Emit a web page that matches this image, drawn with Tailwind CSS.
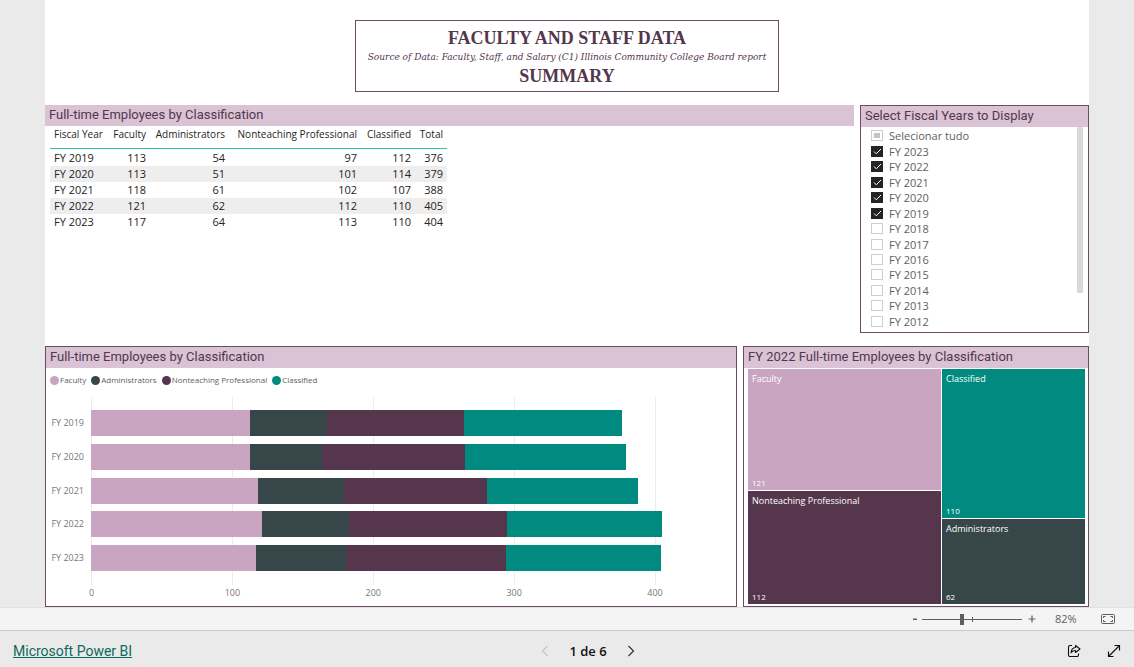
<!DOCTYPE html>
<html lang="en">
<head>
<meta charset="utf-8">
<title>Faculty and Staff Data</title>
<script src="https://cdn.jsdelivr.net/npm/@tailwindcss/browser@4"></script>
</head>
<body class="flex h-screen flex-col overflow-hidden bg-[#eaeaea] font-['Open_Sans','Noto_Sans',sans-serif] text-[#252423]">
<main class="mx-[45px] flex min-h-0 flex-1 flex-col bg-white pt-5">
  <header class="mx-auto flex h-[72px] w-[424px] flex-col items-center justify-center border border-[#6b4c66] pt-[2px] text-center text-[#54364d]">
    <h1 class="font-['Liberation_Serif',serif] text-[18px] leading-[22px] font-bold">FACULTY AND STAFF DATA</h1>
    <p class="font-['DejaVu_Serif_Condensed','DejaVu_Serif',serif] text-[10px] leading-4 whitespace-nowrap italic">Source of Data: Faculty, Staff, and Salary (C1) Illinois Community College Board report</p>
    <h2 class="font-['Liberation_Serif',serif] text-[18px] leading-[22px] font-bold">SUMMARY</h2>
  </header>

  <div class="mt-[13px] flex h-[228px] gap-[6px]">
    <section class="min-w-0 flex-1">
      <h2 class="h-[21px] bg-[#d9c3d5] pl-1 font-['Roboto',sans-serif] text-[13px] leading-[19px] text-[#54364d]">Full-time Employees by Classification</h2>
      <table class="ml-[5px] w-[397px] table-fixed border-separate border-spacing-0 text-[11px] leading-4">
        <colgroup><col class="w-[57px]"><col class="w-[43px]"><col class="w-[79px]"><col class="w-[132px]"><col class="w-[54px]"><col class="w-[32px]"></colgroup>
        <thead class="text-[10px] [&_th]:border-b [&_th]:border-[#2fbfb4] [&_th]:pr-1">
          <tr class="h-[23px] text-right align-top whitespace-nowrap">
            <th class="pl-1 text-left font-normal">Fiscal Year</th><th class="font-normal">Faculty</th><th class="font-normal">Administrators</th><th class="font-normal">Nonteaching Professional</th><th class="font-normal">Classified</th><th class="font-normal">Total</th>
          </tr>
        </thead>
        <tbody class="text-right [&_td]:pr-1 [&_th]:pl-1 [&_th]:text-left [&_th]:font-normal [&>tr:nth-child(even)]:bg-[#eeeeee]">
          <tr class="h-[17px]"><th scope="row">FY 2019</th><td>113</td><td>54</td><td>97</td><td>112</td><td>376</td></tr>
          <tr><th scope="row">FY 2020</th><td>113</td><td>51</td><td>101</td><td>114</td><td>379</td></tr>
          <tr><th scope="row">FY 2021</th><td>118</td><td>61</td><td>102</td><td>107</td><td>388</td></tr>
          <tr><th scope="row">FY 2022</th><td>121</td><td>62</td><td>112</td><td>110</td><td>405</td></tr>
          <tr><th scope="row">FY 2023</th><td>117</td><td>64</td><td>113</td><td>110</td><td>404</td></tr>
        </tbody>
      </table>
    </section>

    <section class="flex w-[229px] flex-col border border-[#6b4c66]">
      <h2 class="h-[21px] shrink-0 bg-[#d9c3d5] pl-1 font-['Roboto',sans-serif] text-[13px] leading-[19px] text-[#54364d]">Select Fiscal Years to Display</h2>
      <div class="flex flex-1 justify-between pr-[5px]">
        <div id="years" class="mt-px flex h-[201px] flex-col pl-[10px] text-[11px] leading-[15px] text-[#605e5c]"></div>
        <div class="h-[166px] w-[6px] bg-[#d9d9d9]"></div>
      </div>
    </section>
  </div>

  <div class="mt-[13px] flex h-[261px] gap-[6px]">
    <section class="flex min-w-0 flex-1 flex-col border border-[#6b4c66]">
      <h2 class="h-[21px] bg-[#d9c3d5] pl-1 font-['Roboto',sans-serif] text-[13px] leading-[19px] text-[#54364d]">Full-time Employees by Classification</h2>
      <ul class="mt-1 flex gap-[5px] pl-1 text-[8px] leading-4 text-[#605e5c]">
        <li class="flex items-center gap-px"><span class="size-[9px] rounded-full bg-[#c9a5c1]"></span>Faculty</li>
        <li class="flex items-center gap-px"><span class="size-[9px] rounded-full bg-[#374649]"></span>Administrators</li>
        <li class="flex items-center gap-px"><span class="size-[9px] rounded-full bg-[#55364c]"></span>Nonteaching Professional</li>
        <li class="flex items-center gap-px"><span class="size-[9px] rounded-full bg-[#018a80]"></span>Classified</li>
      </ul>
      <div class="mt-[9px] flex pr-[10px] text-[9px] text-[#777777]">
        <div id="cats" class="flex h-[174px] w-[45px] flex-col justify-between pt-[13px] pr-[7px] text-right leading-[26px]"></div>
        <div class="min-w-0 flex-1">
          <div class="relative h-[188px]">
            <div class="absolute inset-y-0 left-0 flex w-[88.9%] justify-between"><i class="w-px bg-[#ececec]"></i><i class="w-px bg-[#ececec]"></i><i class="w-px bg-[#ececec]"></i><i class="w-px bg-[#ececec]"></i><i class="w-px bg-[#ececec]"></i></div>
            <div id="bars" class="relative flex h-[174px] flex-col justify-between pt-[13px]"></div>
          </div>
          <div class="flex w-[88.9%] justify-between leading-4"><span class="flex w-px justify-center">0</span><span class="flex w-px justify-center">100</span><span class="flex w-px justify-center">200</span><span class="flex w-px justify-center">300</span><span class="flex w-px justify-center">400</span></div>
        </div>
      </div>
    </section>

    <section class="flex w-[346px] flex-col border border-[#6b4c66]">
      <h2 class="h-[21px] shrink-0 bg-[#d9c3d5] pl-1 font-['Roboto',sans-serif] text-[13px] leading-[19px] text-[#54364d]">FY 2022 Full-time Employees by Classification</h2>
      <div class="mt-px mr-[3px] mb-[2px] ml-1 flex flex-1 gap-px text-[9px] leading-[14px] font-medium text-white">
        <div class="flex w-[193px] flex-col gap-px">
          <div class="flex flex-[121] flex-col justify-between bg-[#c9a5c1] px-1 pt-[3px]"><span>Faculty</span><span class="text-[8px] leading-[14px]">121</span></div>
          <div class="flex flex-[112] flex-col justify-between bg-[#55364c] px-1 pt-[3px]"><span>Nonteaching Professional</span><span class="text-[8px] leading-[14px]">112</span></div>
        </div>
        <div class="flex flex-1 flex-col gap-px">
          <div class="flex flex-[110] flex-col justify-between bg-[#018a80] px-1 pt-[3px]"><span>Classified</span><span class="text-[8px] leading-[14px]">110</span></div>
          <div class="flex flex-[62] flex-col justify-between bg-[#374649] px-1 pt-[3px]"><span>Administrators</span><span class="text-[8px] leading-[14px]">62</span></div>
        </div>
      </div>
    </section>
  </div>
</main>

<div class="flex h-[23px] shrink-0 items-center justify-end border-t border-[#e1e1e1] bg-[#f4f4f4] pr-[19px] text-[#605e5c]">
  <button aria-label="Zoom out" class="flex h-4 w-3 items-center justify-center"><svg class="size-3" viewBox="0 0 12 12"><path d="M3 5.500h4v1.500H3z" fill="currentColor"/></svg></button>
  <div class="relative flex h-4 w-[100px] items-center">
    <div class="absolute top-[6px] left-[50px] h-[5px] w-px bg-[#605e5c]"></div>
    <input type="range" aria-label="Zoom" min="0" max="100" value="40" class="relative h-3 w-full appearance-none bg-transparent [&::-webkit-slider-runnable-track]:h-px [&::-webkit-slider-runnable-track]:bg-[#605e5c] [&::-webkit-slider-thumb]:-mt-[5px] [&::-webkit-slider-thumb]:h-[11px] [&::-webkit-slider-thumb]:w-1 [&::-webkit-slider-thumb]:appearance-none [&::-webkit-slider-thumb]:bg-[#605e5c]">
  </div>
  <button aria-label="Zoom in" class="ml-1 flex size-3 items-center justify-center"><svg class="size-3" viewBox="0 0 12 12"><path d="M2.500 6h7M6 2.500v7" stroke="currentColor" stroke-width="1.200"/></svg></button>
  <span class="ml-[17px] w-[24px] text-[11px] leading-4">82%</span>
  <button aria-label="Fit to page" class="ml-[22px]"><svg class="h-[12px] w-[14px]" viewBox="0 0 14 12" fill="none" stroke="currentColor"><rect x=".5" y="1.500" width="13" height="9" rx="1"/><path d="M2.500 5V3.500H4.500M9.500 3.500h2V5M2.500 7v1.500h2M9.500 8.500h2V7"/></svg></button>
</div>

<footer class="grid h-[37px] shrink-0 grid-cols-3 items-center border-t border-[#c8c8c8] px-[13px] pt-[3px] text-[#111111]">
  <a href="#" class="justify-self-start font-['Roboto',sans-serif] text-[14px] leading-5 text-[#0b6a5c] underline">Microsoft Power BI</a>
  <nav class="flex items-center justify-self-center pl-[42px] text-[13px] leading-5 font-semibold">
    <button aria-label="Previous page" class="text-[#c4c4c4]"><svg class="size-4" viewBox="0 0 16 16" fill="none" stroke="currentColor" stroke-width="1.100"><path d="M10.500 3 5.500 8l5 5"/></svg></button>
    <span class="mx-4">1 de 6</span>
    <button aria-label="Next page" class="text-[#333333]"><svg class="size-4" viewBox="0 0 16 16" fill="none" stroke="currentColor" stroke-width="1.200"><path d="m5.500 3 5 5-5 5"/></svg></button>
  </nav>
  <div class="flex items-center gap-[26px] justify-self-end">
    <button aria-label="Share"><svg class="size-[14px]" viewBox="0 0 14 14" fill="none" stroke="currentColor" stroke-width="1.100" stroke-linejoin="round"><path d="M5 1.500H3A1.500 1.500 0 0 0 1.500 3v8A1.500 1.500 0 0 0 3 12.500h7a1.500 1.500 0 0 0 1.500-1.500V9.500M8.500 1.500l4.500 3.500-4.500 3.500V6.500C6.500 6.500 5.200 7.200 4 8.700c.3-2.800 1.800-5 4.500-5.200z"/></svg></button>
    <button aria-label="Full screen"><svg class="size-[14px]" viewBox="0 0 14 14" fill="none" stroke="currentColor" stroke-width="1.200"><path d="M1.500 12.500l11-11M7.500 1.500h5v5M1.500 7.500v5h5"/></svg></button>
  </div>
</footer>

<script>
const years = document.getElementById('years');
const row = (label, state) => {
  const l = document.createElement('label');
  l.className = 'flex flex-1 items-center gap-[6px]';
  l.innerHTML = `<span class="grid size-3 place-items-center"><input type="checkbox" ${state === 'on' ? 'checked' : ''} class="col-start-1 row-start-1 h-[11px] w-3 appearance-none border border-[#cbcfd4] bg-white checked:border-[#252423] checked:bg-[#252423]">`
    + (state === 'on' ? '<svg class="pointer-events-none col-start-1 row-start-1 size-[11px]" viewBox="0 0 11 11" fill="none" stroke="#fff"><path d="M2 5.500 4.300 7.800 9 3"/></svg>' : '')
    + (state === 'some' ? '<i class="pointer-events-none col-start-1 row-start-1 h-[5px] w-[6px] bg-[#c4c4c4]"></i>' : '')
    + `</span>${label}`;
  years.append(l);
};
row('Selecionar tudo', 'some');
for (let y = 2023; y >= 2012; y--) row('FY ' + y, y >= 2019 ? 'on' : 'off');

const data = [[2019,113,54,97,112],[2020,113,51,101,114],[2021,118,61,102,107],[2022,121,62,112,110],[2023,117,64,113,110]];
const fill = ['bg-[#c9a5c1]','bg-[#374649]','bg-[#55364c]','bg-[#018a80]'];
const AXIS_MAX = 450;
for (const [y, ...v] of data) {
  document.getElementById('cats').insertAdjacentHTML('beforeend', `<span class="h-[26px] whitespace-nowrap">FY ${y}</span>`);
  document.getElementById('bars').insertAdjacentHTML('beforeend',
    `<div class="flex h-[26px]">${v.map((n, i) => `<div class="${fill[i]}" style="width:${n / AXIS_MAX * 100}%"></div>`).join('')}</div>`);
}
</script>
</body>
</html>
